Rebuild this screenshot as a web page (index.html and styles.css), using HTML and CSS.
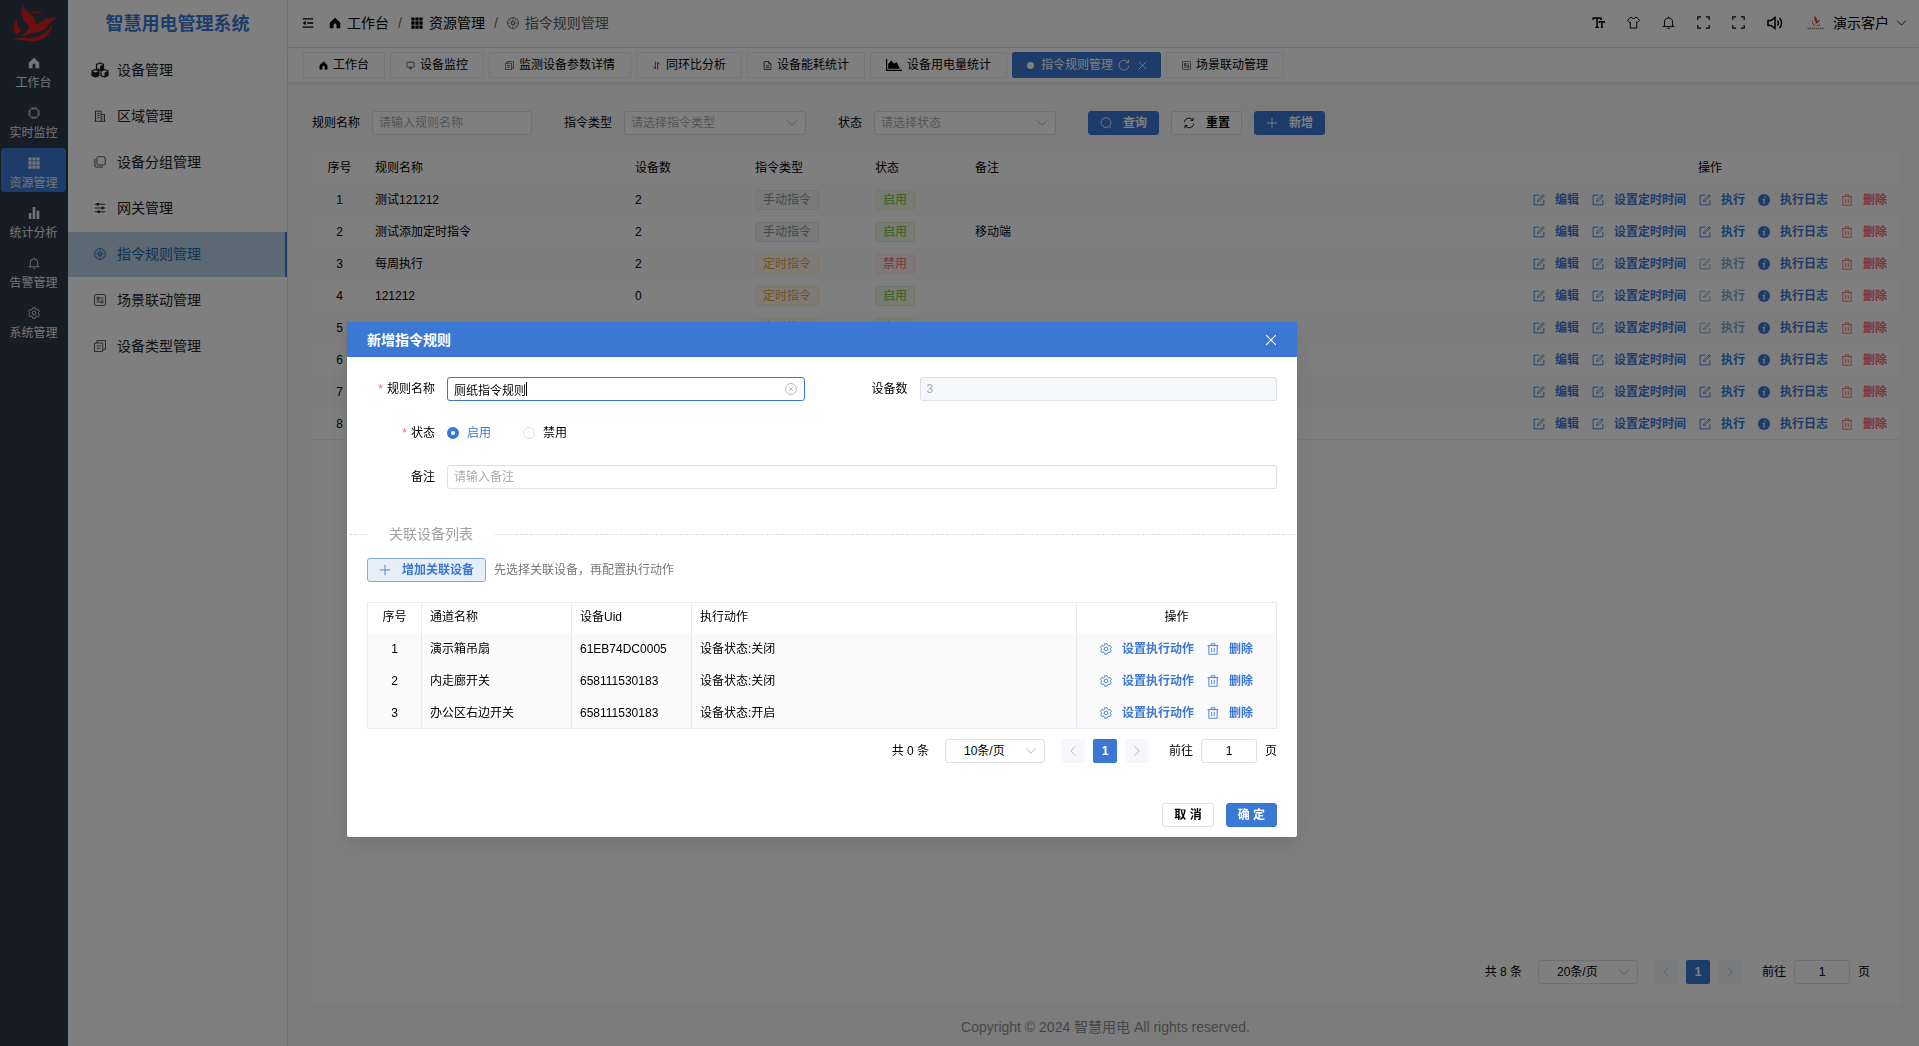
FILE: index.html
```html
<!DOCTYPE html>
<html lang="zh-CN">
<head>
  <meta charset="UTF-8" />
  <meta name="viewport" content="width=device-width, initial-scale=1.0" />
  <title>智慧用电管理系统</title>
  <link rel="stylesheet" href="styles.css">
</head>
<body>

  <!-- Icon sprite -->
  <svg class="sprite" aria-hidden="true">
    <symbol id="i-home" viewBox="0 0 16 16"><path fill="currentColor" d="M8 1 1 7.5V15h5v-4.500a2 2 0 0 1 4 0V15h5V7.500z"/></symbol>
    <symbol id="i-cpu" viewBox="0 0 16 16"><g fill="none" stroke="currentColor" stroke-width="1.100"><rect x="2.500" y="2.500" width="11" height="11" rx="2"/><path d="M5.500 2.500V0M8 2.500V0M10.500 2.500V0M5.500 16v-2.500M8 16v-2.500M10.500 16v-2.500M0 5.500h2.500M0 8h2.500M0 10.500h2.500M13.500 5.500H16M13.500 8H16M13.500 10.500H16"/></g></symbol>
    <symbol id="i-grid" viewBox="0 0 16 16"><path fill="currentColor" d="M.500.500h4.300v4.300H.500zM5.800.500h4.400v4.300H5.800zM11.200.500h4.300v4.300h-4.300zM.500 5.800h4.300v4.400H.500zM5.800 5.800h4.400v4.400H5.800zM11.200 5.800h4.300v4.400h-4.300zM.500 11.200h4.300v4.300H.500zM5.800 11.200h4.400v4.300H5.800zM11.200 11.200h4.300v4.300h-4.300z"/></symbol>
    <symbol id="i-bars" viewBox="0 0 16 16"><path fill="currentColor" d="M1 8h3.500v8H1zM6.200 0h3.500v16H6.200zM11.500 5H15v11h-3.500z"/></symbol>
    <symbol id="i-bell" viewBox="0 0 16 16"><g fill="none" stroke="currentColor" stroke-width="1.200"><path d="M3 13V7.500a5 5 0 0 1 10 0V13M.800 13h14.400M8 2.500V.800M6.500 15.200h3"/></g></symbol>
    <symbol id="i-gear" viewBox="0 0 16 16"><g fill="none" stroke="currentColor" stroke-width="1.200"><path d="M6.300 1h3.400l.5 2 1.300.8 2-.6 1.700 2.900L13.700 7.500v1l1.500 1.400-1.700 2.900-2-.6-1.300.8-.5 2H6.300l-.5-2-1.300-.8-2 .6L.800 9.900l1.500-1.400v-1L.800 6.100l1.700-2.900 2 .6L5.800 3z"/><circle cx="8" cy="8" r="2.500"/></g></symbol>
    <symbol id="i-cubes" viewBox="0 0 18 16"><g fill="none" stroke="currentColor" stroke-width="1.200"><path d="M9 1l3.500 1.500v4L9 8 5.500 6.500v-4zM4.500 7.500L8 9v4.500L4.500 15 1 13.500V9zM13.500 7.500L17 9v4.500L13.500 15 10 13.500V9z"/></g><path fill="currentColor" d="M9 4l3.500-1.500v4L9 8zM4.500 10.500L8 9v4.500L4.500 15zM13.500 10.500L17 9v4.500L13.500 15zM1 9l3.500 1.500V15L1 13.500z"/></symbol>
    <symbol id="i-building" viewBox="0 0 16 16"><g fill="none" stroke="currentColor" stroke-width="1.100"><path d="M2 15V1.500h7.500V15M9.500 6H14v9M.500 15h15M4 4.500h3.500M4 7.500h3.500M4 10.500h3.500M11 9h1.500M11 12h1.500"/></g></symbol>
    <symbol id="i-copy" viewBox="0 0 16 16"><g fill="none" stroke="currentColor" stroke-width="1.100"><rect x="4" y="1" width="11" height="11" rx="2"/><path d="M1.200 4v8.500a2 2 0 0 0 2 2.300H12"/></g></symbol>
    <symbol id="i-sliders" viewBox="0 0 16 16"><path d="M1 3h14M1 8h14M1 13h14" stroke="currentColor" stroke-width="1.200"/><path fill="currentColor" d="M3.500 1.300h3v3.400h-3zM10 6.300h3v3.400h-3zM5 11.300h3v3.400H5z"/></symbol>
    <symbol id="i-wheel" viewBox="0 0 16 16"><g fill="none" stroke="currentColor"><circle cx="8" cy="8" r="7.300" stroke-width="1.100"/><circle cx="8" cy="8" r="2" stroke-width="1.200"/><path stroke-width=".9" d="M8 .700V6M8 10v5.300M.700 8H6M10 8h5.300M2.900 2.900l3.600 3.600M9.500 9.500l3.600 3.600M13.100 2.900 9.500 6.500M6.500 9.500l-3.600 3.600"/></g></symbol>
    <symbol id="i-scene" viewBox="0 0 16 16"><g fill="none" stroke="currentColor" stroke-width="1"><rect x=".700" y=".700" width="14.600" height="14.600" rx="2"/><path d="M7 5.300h5.500M3.500 10.700H9M3.500 8h4M10 8h2.500"/><circle cx="5.300" cy="5.300" r="1.500"/><circle cx="10.700" cy="10.700" r="1.500"/></g></symbol>
    <symbol id="i-docs" viewBox="0 0 16 16"><g fill="none" stroke="currentColor" stroke-width="1"><path d="M.700 4h11v11.300h-11zM4 4V.700h11.300v11.800h-3.600M3.500 8H9M3.500 11H9"/></g></symbol>
    <symbol id="i-fold" viewBox="0 0 16 16"><path d="M1 2.500h14M7 8h8M1 13.500h14" stroke="currentColor" stroke-width="1.800"/><path fill="currentColor" d="M1 8l4-3v6z"/></symbol>
    <symbol id="i-monitor" viewBox="0 0 16 16"><path fill="none" stroke="currentColor" stroke-width="1.100" d="M3 2h10a1.500 1.500 0 0 1 1.500 1.500v6A1.500 1.500 0 0 1 13 11H3a1.500 1.500 0 0 1-1.500-1.500v-6A1.500 1.500 0 0 1 3 2zM5.500 14h5M8 11v3"/></symbol>
    <symbol id="i-sort" viewBox="0 0 16 16"><path fill="none" stroke="currentColor" stroke-width="1.200" d="M6 1v13L2 10M10 15V2l4 4"/></symbol>
    <symbol id="i-file" viewBox="0 0 16 16"><path fill="none" stroke="currentColor" stroke-width="1.200" d="M2 1h8l4 4v10H2zM10 1v4h4M5 8.500h6M5 11.500h6"/></symbol>
    <symbol id="i-area" viewBox="0 0 16 12"><path fill="currentColor" d="M0 0h1.200v10.800H16V12H0zM2.200 9.800V5l3-3.500 2.800 3 2.500-1.500 3.500 6.800z"/></symbol>
    <symbol id="i-reload" viewBox="0 0 16 16"><path fill="none" stroke="currentColor" stroke-width="1.200" d="M14.500 9A6.600 6.600 0 1 1 13 4M14 1v4h-4"/></symbol>
    <symbol id="i-close" viewBox="0 0 16 16"><path stroke="currentColor" stroke-width="1.500" d="M1.500 1.500l13 13M14.500 1.500l-13 13"/></symbol>
    <symbol id="i-search" viewBox="0 0 16 16"><path fill="none" stroke="currentColor" stroke-width="1.200" d="M8 1a6.500 6.500 0 1 1 0 13A6.500 6.500 0 0 1 8 1zM12.500 12.500l2.500 2.500"/></symbol>
    <symbol id="i-refresh" viewBox="0 0 16 16"><path fill="none" stroke="currentColor" stroke-width="1.200" d="M1.500 7A6.500 6.500 0 0 1 13 4M14.500 9A6.500 6.500 0 0 1 3 12M13.500 1v3.500H10M2.500 15v-3.500H6"/></symbol>
    <symbol id="i-plus" viewBox="0 0 16 16"><path stroke="currentColor" stroke-width="1.200" d="M8 1v14M1 8h14"/></symbol>
    <symbol id="i-edit" viewBox="0 0 16 16"><path fill="none" stroke="currentColor" stroke-width="1.200" d="M8.500 1.500H1.500v13h13V8M6 10l.600-2.500L13.500 1 15 2.500 8.500 9.400z"/></symbol>
    <symbol id="i-info" viewBox="0 0 16 16"><circle cx="8" cy="8" r="8" fill="currentColor"/><path d="M9.300 3.200v1.900M6.500 7.200h2L7.500 12h1.600" stroke="#fff" stroke-width="1.500" fill="none"/></symbol>
    <symbol id="i-trash" viewBox="0 0 16 16"><path fill="none" stroke="currentColor" stroke-width="1.200" d="M.800 3.500h14.400M2.500 3.500V15h11V3.500M5.500 3.500V1h5v2.500M6.300 6.500V12M9.700 6.500V12"/></symbol>
    <symbol id="i-down" viewBox="0 0 16 16"><path fill="none" stroke="currentColor" stroke-width="1.200" d="M1.500 4.500L8 11l6.500-6.500"/></symbol>
    <symbol id="i-left" viewBox="0 0 16 16"><path fill="none" stroke="currentColor" stroke-width="1.200" d="M11 2L5 8l6 6"/></symbol>
    <symbol id="i-right" viewBox="0 0 16 16"><path fill="none" stroke="currentColor" stroke-width="1.200" d="M5 2l6 6-6 6"/></symbol>
    <symbol id="i-clear" viewBox="0 0 16 16"><path fill="none" stroke="currentColor" stroke-width="1.100" d="M8 .700a7.300 7.300 0 1 1 0 14.600A7.300 7.300 0 0 1 8 .700zM5.800 5.800l4.400 4.400M10.200 5.800l-4.400 4.400"/></symbol>
    <symbol id="i-size" viewBox="0 0 16 16"><path fill="none" stroke="currentColor" stroke-width="1.800" d="M1.500 5V2.500h9.500V5M6.200 2.500v11M4 14h4.500M9 8.500V7h6.500v1.500M12.200 7v7M11 14h2.500"/></symbol>
    <symbol id="i-shirt" viewBox="0 0 16 16"><path fill="none" stroke="currentColor" stroke-width="1.200" d="M5.500 1.500c.5 2.300 4.500 2.300 5 0l2 .5L15.300 5.500 12.800 8 12 7.300V14.800H4V7.300L3.200 8 .700 5.500 3.500 2z"/></symbol>
    <symbol id="i-full" viewBox="0 0 16 16"><path fill="none" stroke="currentColor" stroke-width="1.400" d="M1 5V1h4M11 1h4v4M15 11v4h-4M5 15H1v-4"/></symbol>
    <symbol id="i-sound" viewBox="0 0 16 14"><path fill="none" stroke="currentColor" stroke-width="1.500" d="M1 4.500h3L8 1.500v11L4 9.500H1zM10.500 4.500a4 4 0 0 1 0 5M12.500 2a7 7 0 0 1 0 10"/></symbol>
    <symbol id="i-logo" viewBox="28 8 146 120">
      <path fill="currentColor" d="M68 12L73 28 92 42C103 50 106 60 104 70C114 74 124 62 136 56L172 49C160 62 152 64 146 74C138 90 120 96 104 98L54 113C72 102 84 90 86 79C74 68 62 52 60 36zM46 56C34 72 34 92 46 107C50 101 56 98 61 92C50 82 46 70 46 56zM28 122C58 110 82 120 102 114C130 108 148 92 160 68C158 100 130 126 96 126C76 126 66 119 28 122zM94 33C110 28 126 34 133 42C120 35 108 34 94 38z"/>
    </symbol>
    <symbol id="i-brand" viewBox="0 0 18 14">
      <path fill="currentColor" d="M7.500 0c2 1 3 3 2.500 5l3-1.500c-.5 2-1.500 3.500-3.500 4L8 8.500c.8-1 1-1.800.7-2.600C7.600 4.500 7 2.500 7.500 0zM5.500 3.500C5 6 6 8 8.500 9.800 6 9.800 4 7 5.500 3.500zM9 9.800c2 0 3.500-1 4-2.800.3 2-1.500 3.800-4 2.800z"/>
      <path stroke="#888" stroke-width="1.600" stroke-dasharray="1.500 .600" d="M.500 12.500h17"/>
    </symbol>
  </svg>

  <div class="app">
    <!-- First level menu -->
    <nav class="rail">
      <svg class="rail-logo"><use href="#i-logo"/></svg>
      <a href="#" class="rail-item"><svg class="icon"><use href="#i-home"/></svg><span>工作台</span></a>
      <a href="#" class="rail-item"><svg class="icon"><use href="#i-cpu"/></svg><span>实时监控</span></a>
      <a href="#" class="rail-item active"><svg class="icon"><use href="#i-grid"/></svg><span>资源管理</span></a>
      <a href="#" class="rail-item"><svg class="icon"><use href="#i-bars"/></svg><span>统计分析</span></a>
      <a href="#" class="rail-item"><svg class="icon"><use href="#i-bell"/></svg><span>告警管理</span></a>
      <a href="#" class="rail-item"><svg class="icon"><use href="#i-gear"/></svg><span>系统管理</span></a>
    </nav>

    <!-- Second level menu -->
    <aside class="sidebar">
      <h1 class="sidebar-title">智慧用电管理系统</h1>
      <a href="#" class="menu-item"><svg class="icon icon-lg"><use href="#i-cubes"/></svg>设备管理</a>
      <a href="#" class="menu-item"><svg class="icon"><use href="#i-building"/></svg>区域管理</a>
      <a href="#" class="menu-item"><svg class="icon"><use href="#i-copy"/></svg>设备分组管理</a>
      <a href="#" class="menu-item"><svg class="icon"><use href="#i-sliders"/></svg>网关管理</a>
      <a href="#" class="menu-item active"><svg class="icon"><use href="#i-wheel"/></svg>指令规则管理</a>
      <a href="#" class="menu-item"><svg class="icon"><use href="#i-scene"/></svg>场景联动管理</a>
      <a href="#" class="menu-item"><svg class="icon"><use href="#i-docs"/></svg>设备类型管理</a>
    </aside>

    <div class="page">
      <header class="navbar">
        <svg class="icon fold"><use href="#i-fold"/></svg>
        <nav class="breadcrumb">
          <a href="#"><svg class="icon"><use href="#i-home"/></svg>工作台</a>
          <i>/</i>
          <a href="#"><svg class="icon"><use href="#i-grid"/></svg>资源管理</a>
          <i>/</i>
          <span><svg class="icon"><use href="#i-wheel"/></svg>指令规则管理</span>
        </nav>
        <div class="tools">
          <button type="button" aria-label="字体大小"><svg class="icon"><use href="#i-size"/></svg></button>
          <button type="button" aria-label="主题"><svg class="icon"><use href="#i-shirt"/></svg></button>
          <button type="button" aria-label="消息"><svg class="icon"><use href="#i-bell"/></svg></button>
          <button type="button" aria-label="全屏"><svg class="icon"><use href="#i-full"/></svg></button>
          <button type="button" aria-label="内容全屏"><svg class="icon"><use href="#i-full"/></svg></button>
          <button type="button" aria-label="声音"><svg class="icon icon-lg"><use href="#i-sound"/></svg></button>
        </div>
        <div class="user">
          <svg class="user-logo"><use href="#i-brand"/></svg>
          <span>演示客户</span>
          <svg class="icon user-arrow"><use href="#i-down"/></svg>
        </div>
      </header>

      <div class="tags-view">
        <a href="#" class="tab"><svg class="icon"><use href="#i-home"/></svg>工作台</a>
        <a href="#" class="tab"><svg class="icon"><use href="#i-monitor"/></svg>设备监控</a>
        <a href="#" class="tab"><svg class="icon"><use href="#i-docs"/></svg>监测设备参数详情</a>
        <a href="#" class="tab"><svg class="icon"><use href="#i-sort"/></svg>同环比分析</a>
        <a href="#" class="tab"><svg class="icon"><use href="#i-file"/></svg>设备能耗统计</a>
        <a href="#" class="tab"><svg class="icon icon-wide"><use href="#i-area"/></svg>设备用电量统计</a>
        <a href="#" class="tab active"><span class="dot"></span>指令规则管理<svg class="icon tab-reload"><use href="#i-reload"/></svg><svg class="icon tab-close"><use href="#i-close"/></svg></a>
        <a href="#" class="tab"><svg class="icon"><use href="#i-scene"/></svg>场景联动管理</a>
      </div>

      <main class="content">
        <form class="filter">
          <label for="q-name">规则名称</label>
          <input id="q-name" class="field q-name" type="text" placeholder="请输入规则名称">
          <label for="q-type">指令类型</label>
          <div class="select q-select">
            <select id="q-type" class="field empty"><option>请选择指令类型</option></select>
            <svg class="icon"><use href="#i-down"/></svg>
          </div>
          <label for="q-state">状态</label>
          <div class="select q-select">
            <select id="q-state" class="field empty"><option>请选择状态</option></select>
            <svg class="icon"><use href="#i-down"/></svg>
          </div>
          <div class="filter-btns">
            <button type="button" class="btn primary"><svg class="icon"><use href="#i-search"/></svg>查询</button>
            <button type="button" class="btn"><svg class="icon"><use href="#i-refresh"/></svg>重置</button>
            <button type="button" class="btn primary"><svg class="icon"><use href="#i-plus"/></svg>新增</button>
          </div>
        </form>

        <section class="card">
          <table class="grid rules">
            <colgroup><col class="w-index"><col class="w-name"><col class="w-mid"><col class="w-mid"><col class="w-state"><col><col class="w-ops"></colgroup>
            <thead>
              <tr><th class="center">序号</th><th>规则名称</th><th>设备数</th><th>指令类型</th><th>状态</th><th>备注</th><th class="center">操作</th></tr>
            </thead>
            <tbody id="rule-rows"></tbody>
          </table>
          <div class="pager">
            <span>共 8 条</span>
            <div class="select page-size">
              <select class="field" aria-label="每页条数"><option>20条/页</option></select>
              <svg class="icon"><use href="#i-down"/></svg>
            </div>
            <div class="page-nums">
              <button type="button" disabled aria-label="上一页"><svg class="icon"><use href="#i-left"/></svg></button>
              <button type="button" class="active">1</button>
              <button type="button" disabled aria-label="下一页"><svg class="icon"><use href="#i-right"/></svg></button>
            </div>
            <label class="jump">前往<input class="field" type="text" value="1">页</label>
          </div>
        </section>
      </main>

      <footer class="footer">Copyright © 2024 智慧用电 All rights reserved.</footer>
    </div>
  </div>

  <!-- Dialog: new rule -->
  <div class="overlay">
    <div class="dialog" role="dialog" aria-labelledby="dialog-title">
      <div class="dialog-header">
        <h2 id="dialog-title">新增指令规则</h2>
        <button type="button" aria-label="关闭"><svg class="icon"><use href="#i-close"/></svg></button>
      </div>
      <form class="dialog-body">
        <div class="form-row">
          <label class="form-label required" for="f-name">规则名称</label>
          <div class="input-box">
            <input id="f-name" class="field focus" type="text" value="厕纸指令规则">
            <span class="caret"></span>
            <svg class="icon clear"><use href="#i-clear"/></svg>
          </div>
          <label class="form-label second" for="f-count">设备数</label>
          <div class="input-box"><input id="f-count" class="field" type="text" value="3" disabled></div>
        </div>
        <div class="form-row">
          <span class="form-label required">状态</span>
          <label class="radio"><input type="radio" name="state" checked><span>启用</span></label>
          <label class="radio"><input type="radio" name="state"><span>禁用</span></label>
        </div>
        <div class="form-row">
          <label class="form-label" for="f-remark">备注</label>
          <div class="input-box"><input id="f-remark" class="field" type="text" placeholder="请输入备注"></div>
        </div>
      </form>
      <div class="divider"><span>关联设备列表</span></div>
      <div class="devices">
        <div class="devices-bar">
          <button type="button" class="btn plain"><svg class="icon"><use href="#i-plus"/></svg>增加关联设备</button>
          <span>先选择关联设备，再配置执行动作</span>
        </div>
        <table class="grid bordered">
          <colgroup><col class="w-index"><col class="w-channel"><col class="w-mid"><col><col class="w-action"></colgroup>
          <thead>
            <tr><th class="center">序号</th><th>通道名称</th><th>设备Uid</th><th>执行动作</th><th class="center">操作</th></tr>
          </thead>
          <tbody id="device-rows"></tbody>
        </table>
        <div class="pager">
          <span>共 0 条</span>
          <div class="select page-size">
            <select class="field" aria-label="每页条数"><option>10条/页</option></select>
            <svg class="icon"><use href="#i-down"/></svg>
          </div>
          <div class="page-nums">
            <button type="button" disabled aria-label="上一页"><svg class="icon"><use href="#i-left"/></svg></button>
            <button type="button" class="active">1</button>
            <button type="button" disabled aria-label="下一页"><svg class="icon"><use href="#i-right"/></svg></button>
          </div>
          <label class="jump">前往<input class="field" type="text" value="1">页</label>
        </div>
      </div>
      <div class="dialog-footer">
        <button type="button" class="btn">取 消</button>
        <button type="button" class="btn primary">确 定</button>
      </div>
    </div>
  </div>

  <script>
    const tags = {
      manual: '<span class="tag info">手动指令</span>',
      timed: '<span class="tag warning">定时指令</span>',
      on: '<span class="tag success">启用</span>',
      off: '<span class="tag danger">禁用</span>'
    };

    const rules = [
      { name: "测试121212", count: 2, type: "manual", state: "on", run: true },
      { name: "测试添加定时指令", count: 2, type: "manual", state: "on", remark: "移动端", run: true },
      { name: "每周执行", count: 2, type: "timed", state: "off", run: false },
      { name: "121212", count: 0, type: "timed", state: "on", run: false },
      { type: "timed", state: "on", run: false },
      { run: true },
      { run: true },
      { run: true }
    ];

    const devices = [
      { name: "演示箱吊扇", uid: "61EB74DC0005", action: "设备状态:关闭" },
      { name: "内走廊开关", uid: "658111530183", action: "设备状态:关闭" },
      { name: "办公区右边开关", uid: "658111530183", action: "设备状态:开启" }
    ];

    // Text button with an icon in front
    function link(icon, text, cls = "", disabled = false) {
      return `<button type="button" class="link ${cls}" ${disabled ? "disabled" : ""}><svg class="icon"><use href="#${icon}"/></svg>${text}</button>`;
    }

    document.getElementById("rule-rows").innerHTML = rules.map((r, i) => `
      <tr>
        <td class="center">${i + 1}</td>
        <td>${r.name ?? ""}</td>
        <td>${r.count ?? ""}</td>
        <td>${tags[r.type] ?? ""}</td>
        <td>${tags[r.state] ?? ""}</td>
        <td>${r.remark ?? ""}</td>
        <td><div class="ops">
          ${link("i-edit", "编辑")}
          ${link("i-edit", "设置定时时间")}
          ${link("i-edit", "执行", "", !r.run)}
          ${link("i-info", "执行日志")}
          ${link("i-trash", "删除", "danger")}
        </div></td>
      </tr>`).join("");

    document.getElementById("device-rows").innerHTML = devices.map((d, i) => `
      <tr>
        <td class="center">${i + 1}</td>
        <td>${d.name}</td>
        <td>${d.uid}</td>
        <td>${d.action}</td>
        <td><div class="ops">${link("i-gear", "设置执行动作")}${link("i-trash", "删除")}</div></td>
      </tr>`).join("");
  </script>
</body>
</html>
```

FILE: styles.css
```css
* {
  box-sizing: border-box;
}

body {
  margin: 0;
  font-family: "Liberation Sans", "Noto Sans CJK SC", sans-serif;
  font-size: 12px;
  line-height: 16px;
  color: #000;
  background-color: #f9f9f9;
}

a {
  color: inherit;
  text-decoration: none;
}

button,
input,
select {
  font-family: inherit;
  font-size: 12px;
  line-height: 16px;
  color: inherit;
  margin: 0;
}

button {
  padding: 0;
  border: none;
  background: none;
  cursor: pointer;
}

.sprite {
  display: none;
}

.icon {
  width: 12px;
  height: 12px;
  flex: none;
  display: block;
}

.app {
  display: flex;
  height: 100vh;
  overflow: hidden;
}

/* First level menu */
.rail {
  width: 68px;
  flex: none;
  background-color: #2d3b4b;
  color: #e6e9ee;
  display: flex;
  flex-direction: column;
  gap: 6px;
}

.rail-logo {
  width: 48px;
  height: 38px;
  margin: 4px 0 0 10px;
  color: #d81e1e;
}

.rail-item {
  height: 44px;
  margin: 0 2px 0 1px;
  padding-top: 9px;
  border-radius: 4px;
  display: flex;
  flex-direction: column;
  align-items: center;
  gap: 6px;
}

.rail-item.active {
  background-color: #3b78d4;
}

/* Second level menu */
.sidebar {
  width: 220px;
  flex: none;
  background-color: #fff;
  border-right: 1px solid #e2e4ea;
}

.sidebar-title {
  margin: 0;
  height: 48px;
  line-height: 48px;
  font-size: 18px;
  text-align: center;
  color: #3b78d4;
}

.menu-item {
  display: flex;
  align-items: center;
  gap: 11px;
  height: 45px;
  margin-bottom: 1px;
  padding: 0 0 2px 26px;
  font-size: 14px;
  color: #222;
}

.menu-item .icon-lg {
  width: 18px;
  height: 16px;
  margin: 0 -3px;
}

.menu-item.active {
  background-color: #b8d0e6;
  border-right: 2px solid #3b78d4;
  color: #1f62a8;
}

/* Right side */
.page {
  flex: 1;
  min-width: 0;
  display: flex;
  flex-direction: column;
}

.navbar {
  height: 48px;
  display: flex;
  align-items: center;
  padding: 0 12px 2px 14px;
  background-color: #fff;
  border-bottom: 1px solid #e6e6ea;
  font-size: 14px;
}

.fold {
  margin-right: 15px;
}

.breadcrumb {
  display: flex;
  align-items: center;
  gap: 9px;
}

.breadcrumb a,
.breadcrumb span {
  display: flex;
  align-items: center;
  gap: 6px;
}

.breadcrumb span,
.breadcrumb i {
  color: #5a5d63;
}

.breadcrumb i {
  font-style: normal;
}

.tools {
  margin-left: auto;
  display: flex;
  gap: 22px;
}

.tools .icon {
  width: 13px;
  height: 13px;
}

.tools .icon-lg {
  width: 16px;
  height: 14px;
}

.tools button {
  display: flex;
  align-items: center;
}

.user {
  display: flex;
  align-items: center;
  margin-left: 24px;
}

.user-logo {
  width: 18px;
  height: 14px;
  margin-right: 8px;
  color: #d84040;
}

.user-arrow {
  margin-left: 7px;
  width: 11px;
}

.tags-view {
  height: 35px;
  display: flex;
  gap: 5px;
  padding: 4px 15px;
  background-color: #fff;
  border-bottom: 1px solid #e8e8ea;
  box-shadow: 0 1px 3px rgba(0, 0, 0, 0.08);
}

.tab {
  display: flex;
  align-items: center;
  gap: 5px;
  height: 26px;
  padding: 0 15px;
  border: 1px solid #ebecf2;
  white-space: nowrap;
}

.tab .icon {
  width: 9px;
  height: 9px;
}

.tab .icon-wide {
  width: 16px;
  height: 12px;
}

.tab.active {
  padding: 0 13px 0 12px;
  background-color: #3b78d4;
  border-color: #3b78d4;
  border-radius: 2px;
  color: #fff;
}

.tab .dot {
  width: 7px;
  height: 7px;
  margin: 0 2px;
  border-radius: 50%;
  background-color: #fff;
}

.tab .tab-reload {
  width: 12px;
  height: 12px;
}

.tab .tab-close {
  margin-left: 3px;
}

.content {
  flex: 1;
  display: flex;
  flex-direction: column;
  gap: 18px;
  padding: 28px 19px 0 24px;
}

.footer {
  height: 42px;
  padding-left: 4px;
  line-height: 46px;
  font-size: 14px;
  text-align: center;
  color: #8a8d93;
}

/* Fields */
.field {
  width: 100%;
  height: 24px;
  padding: 0 6px;
  border: 1px solid #dcdfe6;
  border-radius: 3px;
  background-color: #fff;
  outline: none;
  appearance: none;
}

.field::placeholder {
  color: #a8abb2;
}

.field.empty {
  color: #a8abb2;
}

.field.focus {
  border-color: #3b78d4;
}

.field:disabled {
  background-color: #f5f7fa;
  color: #a8abb2;
}

.select {
  position: relative;
}

.select .icon {
  position: absolute;
  right: 8px;
  top: 6px;
  color: #a8abb2;
  pointer-events: none;
}

.filter {
  display: flex;
  align-items: center;
}

.filter label {
  margin-right: 12px;
}

.q-name {
  width: 160px;
  margin-right: 32px;
}

.q-select {
  width: 182px;
  margin-right: 32px;
}

.filter-btns {
  display: flex;
  gap: 12px;
}

/* Buttons */
.btn {
  display: flex;
  align-items: center;
  gap: 11px;
  height: 24px;
  padding: 0 11px;
  border: 1px solid #dcdfe6;
  border-radius: 3px;
  background-color: #fff;
  font-weight: bold;
  white-space: nowrap;
}

.btn.primary {
  background-color: #3b78d4;
  border-color: #3b78d4;
  color: #fff;
}

.btn.plain {
  background-color: #e8eef7;
  border-color: #82a9dc;
  color: #3b78d4;
}

.link {
  display: flex;
  align-items: center;
  gap: 10px;
  font-weight: bold;
  color: #3b78d4;
  white-space: nowrap;
}

.link.danger {
  color: #f56c6c;
}

.link:disabled {
  color: #8fa9c4;
}

/* Tables */
.card {
  flex: 1;
  display: flex;
  flex-direction: column;
  justify-content: space-between;
  padding-bottom: 20px;
  background-color: #fff;
}

.grid {
  width: 100%;
  table-layout: fixed;
  border-collapse: separate;
  border-spacing: 0;
}

.grid th,
.grid td {
  height: 32px;
  padding: 0 8px;
  text-align: left;
  font-weight: normal;
  white-space: nowrap;
}

.grid th {
  height: 31px;
  padding-bottom: 2px;
}

.grid .center {
  text-align: center;
}

.rules tbody tr:nth-child(odd) {
  background-color: #fafafa;
}

.rules tbody tr:last-child td {
  border-bottom: 1px solid #ebeef5;
}

.w-index {
  width: 55px;
}

.w-name {
  width: 260px;
}

.w-mid {
  width: 120px;
}

.w-state {
  width: 100px;
}

.w-channel {
  width: 150px;
}

.w-ops {
  width: 380px;
}

.w-action {
  width: 200px;
}

.ops {
  display: flex;
  justify-content: center;
  gap: 13px;
}

.tag {
  display: inline-block;
  height: 20px;
  line-height: 18px;
  padding: 0 7px;
  border: 1px solid;
  border-radius: 3px;
  vertical-align: middle;
}

.tag.info {
  color: #909399;
  background-color: #f4f4f5;
  border-color: #e9e9eb;
}

.tag.success {
  color: #67c23a;
  background-color: #f0f9eb;
  border-color: #e1f3d8;
}

.tag.warning {
  color: #e6a23c;
  background-color: #fdf6ec;
  border-color: #faecd8;
}

.tag.danger {
  color: #f56c6c;
  background-color: #fef0f0;
  border-color: #fde2e2;
}

.bordered th,
.bordered td {
  border-right: 1px solid #e6eaf3;
}

.bordered th:first-child,
.bordered td:first-child {
  border-left: 1px solid #e6eaf3;
}

.bordered th {
  border-top: 1px solid #e6eaf3;
}

.bordered tr:last-child td {
  border-bottom: 1px solid #e6eaf3;
}

.bordered tbody tr {
  background-color: #fafafa;
}

/* Pagination */
.pager {
  display: flex;
  align-items: center;
  justify-content: flex-end;
  gap: 16px;
}

.card .pager {
  padding-right: 30px;
}

.page-size {
  width: 100px;
}

.page-size .field {
  padding: 0 18px;
}

.page-nums {
  display: flex;
  gap: 8px;
}

.page-nums button {
  width: 24px;
  height: 24px;
  display: flex;
  align-items: center;
  justify-content: center;
  border-radius: 2px;
  background-color: #f5f7fa;
  color: #a8abb2;
}

.page-nums button.active {
  background-color: #3b78d4;
  color: #fff;
  font-weight: bold;
}

.jump {
  display: flex;
  align-items: center;
  gap: 8px;
  margin-left: 4px;
}

.jump .field {
  width: 56px;
  text-align: center;
}

/* Dialog */
.overlay {
  position: fixed;
  inset: 0;
  background-color: rgba(0, 0, 0, 0.5);
}

.dialog {
  position: absolute;
  left: 347px;
  top: 322px;
  width: 950px;
  max-width: 100%;
  background-color: #fff;
  border-radius: 2px;
  box-shadow: 0 12px 32px 4px rgba(0, 0, 0, 0.04), 0 8px 20px rgba(0, 0, 0, 0.08);
}

.dialog-header {
  height: 35px;
  display: flex;
  align-items: center;
  justify-content: space-between;
  padding: 0 20px;
  background-color: #3b78d4;
  color: #fff;
}

.dialog-header h2 {
  margin: 0;
  font-size: 14px;
}

.dialog-body {
  display: flex;
  flex-direction: column;
  gap: 20px;
  padding: 20px 20px 35px;
}

.form-row {
  display: flex;
  align-items: center;
  height: 24px;
}

.form-label {
  width: 80px;
  flex: none;
  padding-right: 12px;
  text-align: right;
}

.form-label.second {
  width: 115px;
}

.form-label.required::before {
  content: "*";
  margin-right: 4px;
  color: #f56c6c;
}

.input-box {
  position: relative;
  flex: 1;
}

.clear {
  position: absolute;
  right: 8px;
  top: 6px;
  color: #a8abb2;
}

.caret {
  position: absolute;
  left: 79px;
  top: 5px;
  width: 1px;
  height: 14px;
  background-color: #000;
}

.radio {
  display: flex;
  align-items: center;
  gap: 8px;
  margin-right: 32px;
}

.radio input {
  appearance: none;
  width: 12px;
  height: 12px;
  border: 1px solid #dcdfe6;
  border-radius: 50%;
}

.radio input:checked {
  border: 4px solid #3b78d4;
}

.radio input:checked + span {
  color: #3b78d4;
}

.divider {
  display: flex;
  align-items: center;
  gap: 22px;
  padding: 0 2px;
  font-size: 14px;
  line-height: 20px;
  color: #a0a2a6;
}

.divider::before,
.divider::after {
  content: "";
  width: 18px;
  border-top: 1px dashed #dcdfe6;
}

.divider::after {
  flex: 1;
}

.devices {
  padding: 14px 20px 0;
}

.devices-bar {
  display: flex;
  align-items: center;
  gap: 8px;
  margin-bottom: 20px;
  color: #777;
}

.devices .pager {
  margin-top: 10px;
}

.dialog-footer {
  display: flex;
  justify-content: flex-end;
  gap: 12px;
  padding: 40px 20px 10px;
}
```
